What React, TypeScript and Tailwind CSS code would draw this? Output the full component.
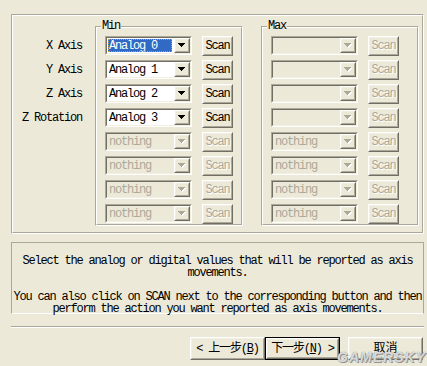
import type { ReactNode } from 'react'

const mono = '[font-family:Liberation_Mono,Noto_Sans_CJK_SC,monospace]'

type BoxProps = { children?: ReactNode; className?: string }

// classic sunken 2px edge (combo boxes)
function Sunken({ children, className = '' }: BoxProps) {
  return (
    <div className={`border border-t-[#aca899] border-l-[#aca899] border-r-white border-b-white ${className}`}>
      <div className="flex h-full border border-t-[#716f64] border-l-[#716f64] border-r-[#f1efe2] border-b-[#f1efe2]">
        {children}
      </div>
    </div>
  )
}

// classic raised 2px edge (push buttons)
function Raised({ children, className = '' }: BoxProps) {
  return (
    <div className={`border border-t-white border-l-white border-r-[#716f64] border-b-[#716f64] bg-[#ece9d8] ${className}`}>
      <div className="flex h-full items-center justify-center whitespace-nowrap border border-t-[#f1efe2] border-l-[#f1efe2] border-r-[#aca899] border-b-[#aca899]">
        {children}
      </div>
    </div>
  )
}

// etched frame: grey line + white line
function Etched({ children, className = '' }: BoxProps) {
  return (
    <div className={`relative border border-t-[#aca899] border-l-[#aca899] border-r-white border-b-white ${className}`}>
      <div className="h-full border border-t-white border-l-white border-r-[#aca899] border-b-[#aca899]">
        {children}
      </div>
    </div>
  )
}

function Arrow({ disabled }: { disabled?: boolean }) {
  const d = 'M0 0h7v1h-1v1h-1v1h-1v1h-1v-1h-1v-1h-1v-1h-1z'
  return (
    <svg width="8" height="5" viewBox="0 0 8 5" shapeRendering="crispEdges">
      {disabled && <path d={d} fill="#fff" transform="translate(1 1)" />}
      <path d={d} fill={disabled ? '#aca899' : '#000'} />
    </svg>
  )
}

type Row = { text: string; selected?: boolean; disabled?: boolean; scan: boolean }

function Combo({ text, selected, disabled }: Row) {
  return (
    <Sunken className="h-[19px] w-[87px] shrink-0">
      <div className={`flex flex-1 items-center ${disabled ? 'bg-[#ece9d8]' : 'bg-white'}`}>
        {selected ? (
          <span className="ml-[1px] mr-[2px] flex h-[13px] flex-1 items-center bg-[#316ac5] pl-[1px] text-white outline outline-1 outline-dotted outline-[#ce9b3a] -outline-offset-1">
            {text}
          </span>
        ) : (
          <span className={`pl-[2px] ${disabled ? 'text-[#aca899]' : 'text-black'}`}>{text}</span>
        )}
      </div>
      <Raised className="w-[16px]">
        <Arrow disabled={disabled} />
      </Raised>
    </Sunken>
  )
}

function Scan({ enabled }: { enabled: boolean }) {
  return (
    <Raised className="h-[20px] w-[31px] shrink-0">
      <span className={enabled ? 'text-black' : 'text-[#aca899] [text-shadow:1px_1px_0_#fff]'}>Scan</span>
    </Raised>
  )
}

function GroupBox({ title, rows, className = '' }: { title: string; rows: Row[]; className?: string }) {
  return (
    <Etched className={className}>
      <div className="flex flex-col gap-[4px] pl-[8px] pt-[8px]">
        {rows.map((r, i) => (
          <div key={i} className="flex h-[20px] items-start gap-[10px]">
            <Combo {...r} />
            <Scan enabled={r.scan} />
          </div>
        ))}
      </div>
      <span className="absolute left-[5px] top-[-7px] bg-[#ece9d8] px-[1px] leading-[12px]">{title}</span>
    </Etched>
  )
}

const labels = ['X Axis', 'Y Axis', 'Z Axis', 'Z Rotation', '', '', '', '']

const minRows: Row[] = [
  { text: 'Analog 0', selected: true, scan: true },
  { text: 'Analog 1', scan: true },
  { text: 'Analog 2', scan: true },
  { text: 'Analog 3', scan: true },
  { text: 'nothing', disabled: true, scan: false },
  { text: 'nothing', disabled: true, scan: false },
  { text: 'nothing', disabled: true, scan: false },
  { text: 'nothing', disabled: true, scan: false },
]

const maxRows: Row[] = [
  { text: '', disabled: true, scan: false },
  { text: '', disabled: true, scan: false },
  { text: '', disabled: true, scan: false },
  { text: '', disabled: true, scan: false },
  { text: 'nothing', disabled: true, scan: false },
  { text: 'nothing', disabled: true, scan: false },
  { text: 'nothing', disabled: true, scan: false },
  { text: 'nothing', disabled: true, scan: false },
]

const help = [
  'Select the analog or digital values that will be reported as axis',
  'movements.',
  '',
  'You can also click on SCAN next to the corresponding button and then',
  'perform the action you want reported as axis movements.',
]

export default function App() {
  return (
    <div
      className={`relative flex h-[366px] w-[427px] flex-col overflow-hidden bg-[#ece9d8] pl-[11px] pr-[3px] pt-[14px] text-[12px] leading-[12px] tracking-[-1.2px] text-black ${mono}`}
    >
      {/* Axis mapping panel */}
      <Etched className="h-[220px] shrink-0">
        <div className="flex pt-[10px]">
          <div className="flex w-[69px] flex-col gap-[4px] pt-[10px]">
            {labels.map((l, i) => (
              <div key={i} className="flex h-[20px] items-center justify-end whitespace-pre">
                {l}
              </div>
            ))}
          </div>
          <GroupBox title="Min" rows={minRows} className="ml-[13px] h-[200px] w-[148px]" />
          <GroupBox title="Max" rows={maxRows} className="ml-[18px] h-[200px] w-[158px]" />
        </div>
      </Etched>

      {/* Help text */}
      <div className="mt-[8px] h-[72px] shrink-0 border border-t-[#aca899] border-l-[#aca899] border-r-[#aca899] border-b-white pt-[12px] text-center">
        {help.map((line, i) => (
          <div key={i} className="h-[12px] whitespace-pre">
            {line}
          </div>
        ))}
      </div>

      {/* Separator */}
      <div className="mt-[12px] h-[2px] shrink-0 border-t border-b border-t-[#aca899] border-b-white" />

      {/* Wizard buttons */}
      <div className="mr-[1px] mt-[9px] flex justify-end">
        <Raised className="h-[23px] w-[75px]">
          <span className="pt-[1px]">
            &lt; 上一步(<u>B</u>)
          </span>
        </Raised>
        <div className="h-[23px] w-[75px] border border-black">
          <Raised className="h-full w-full">
            <span className="pt-[1px]">
              下一步(<u>N</u>) &gt;
            </span>
          </Raised>
        </div>
        <Raised className="ml-[8px] h-[23px] w-[75px]">
          <span className="pt-[1px] tracking-normal">取消</span>
        </Raised>
      </div>

      {/* watermark */}
      <span className="absolute bottom-[4px] right-[1px] [font-family:Liberation_Sans,sans-serif] text-[14px] font-bold italic leading-[10px] tracking-[1px] text-white/75 [text-shadow:0_0_1px_#666,1px_1px_0_#999]">
        GAMERSKY
      </span>
    </div>
  )
}
